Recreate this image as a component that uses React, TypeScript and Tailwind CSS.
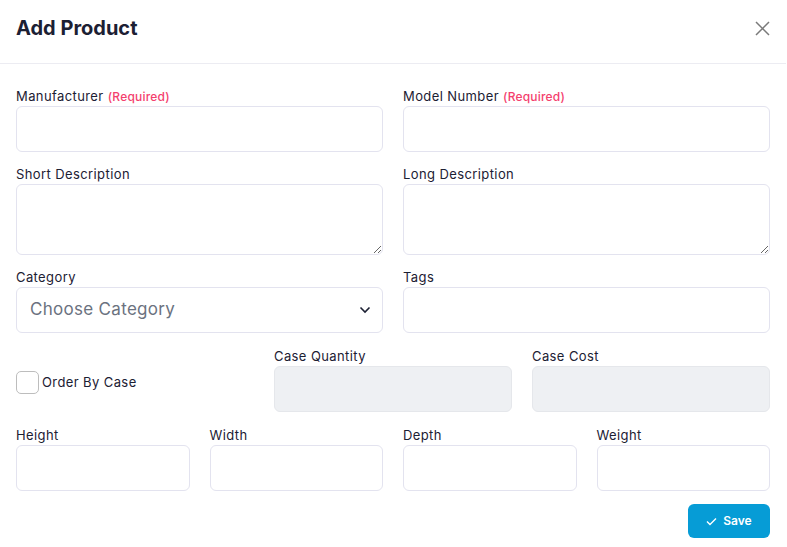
import React from "react";

const font = { fontFamily: "Inter, 'Open Sans', sans-serif" };

const inputCls =
  "block w-full h-[46px] rounded-md border border-[#e3e3ef] bg-white px-3 text-sm text-[#1c2033] outline-none";

function Label({ text, required }: { text: string; required?: boolean }) {
  return (
    <label className="block h-[20px] text-[13px] leading-[20px] tracking-[0.4px] text-[#1c2033]">
      {text}
      {required && (
        <span className="ml-1 text-[12px] font-medium tracking-[0.2px] text-[#f43f6e]">(Required)</span>
      )}
    </label>
  );
}

function Field({ label, required, disabled }: { label: string; required?: boolean; disabled?: boolean }) {
  return (
    <div>
      <Label text={label} required={required} />
      <input
        disabled={disabled}
        className={
          disabled
            ? "block w-full h-[46px] rounded-md border border-[#e5e7eb] bg-[#eef0f3] px-3 outline-none"
            : inputCls
        }
      />
    </div>
  );
}

function Area({ label }: { label: string }) {
  return (
    <div>
      <Label text={label} />
      <textarea className="block w-full h-[71px] rounded-md border border-[#e3e3ef] bg-white px-3 py-2 text-sm outline-none" />
    </div>
  );
}

export default function App() {
  return (
    <div className="min-h-screen w-[786px] bg-white" style={font}>
      <div className="flex h-[64px] items-start justify-between border-b border-[#ececf2] px-4 pt-[16px]">
        <h1 className="text-[20px] leading-[24px] font-bold text-[#1c2033]">Add Product</h1>
        <button type="button" className="mt-[5px] text-[#7a7a7a]" aria-label="close">
          <svg width="15" height="15" viewBox="0 0 15 15" fill="none" stroke="currentColor" strokeWidth="1.5">
            <path d="M1 1L14 14M14 1L1 14" />
          </svg>
        </button>
      </div>

      <div className="px-4 pt-[22px]">
        <div className="grid grid-cols-2 gap-x-5 gap-y-3">
          <Field label="Manufacturer" required />
          <Field label="Model Number" required />
          <Area label="Short Description" />
          <Area label="Long Description" />
          <div>
            <Label text="Category" />
            <div className="relative">
              <select
                defaultValue=""
                className="block w-full h-[46px] appearance-none rounded-md border border-[#e3e3ef] bg-white px-[13px] text-[17px] tracking-[0.3px] text-[#6b7280] outline-none"
              >
                <option value="" disabled>
                  Choose Category
                </option>
              </select>
              <svg
                className="pointer-events-none absolute right-[12px] top-[19px] text-[#1c2033]"
                width="12"
                height="8"
                viewBox="0 0 12 8"
                fill="none"
                stroke="currentColor"
                strokeWidth="1.6"
              >
                <path d="M1.5 1.5L6 6L10.5 1.5" />
              </svg>
            </div>
          </div>
          <Field label="Tags" />
        </div>

        <div className="mt-[13px] grid grid-cols-3 gap-x-5">
          <div className="flex items-start pt-[25px]">
            <label className="flex items-center gap-[3px] text-[13px] tracking-[0.4px] text-[#1c2033]">
              <span className="block h-[23px] w-[23px] rounded-[5px] border border-[#bdbdbd] bg-white" />
              Order By Case
            </label>
          </div>
          <Field label="Case Quantity" disabled />
          <Field label="Case Cost" disabled />
        </div>

        <div className="mt-[13px] grid grid-cols-4 gap-x-5">
          <Field label="Height" />
          <Field label="Width" />
          <Field label="Depth" />
          <Field label="Weight" />
        </div>

        <div className="mt-[13px] flex justify-end">
          <button
            type="button"
            className="flex h-[34px] w-[82px] items-center justify-center gap-[6px] rounded-md bg-[#069cd6] text-[12px] font-semibold text-white"
          >
            <svg width="11" height="9" viewBox="0 0 11 9" fill="none" stroke="currentColor" strokeWidth="1.4">
              <path d="M1 4.5L4 7.5L10 1.5" />
            </svg>
            Save
          </button>
        </div>
      </div>
    </div>
  );
}
